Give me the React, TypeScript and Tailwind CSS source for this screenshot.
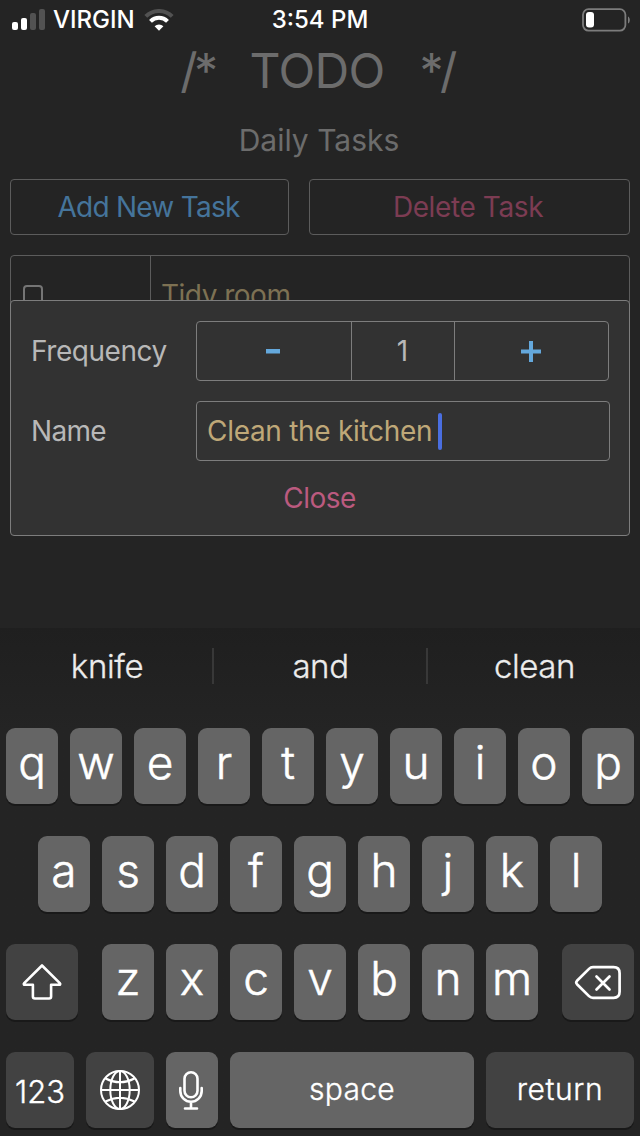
import type { ReactNode } from "react";

function StatusBar() {
  return (
    <header className="grid h-10 shrink-0 grid-cols-[1fr_auto_1fr] items-center pr-[10px] pl-3 text-[24px] leading-none font-medium text-white">
      <div className="flex items-center">
        <svg width="34" height="22" viewBox="0 0 34 22" aria-hidden="true">
          <rect x="0" y="13" width="6" height="8" rx="2" fill="#fff" />
          <rect x="9" y="9" width="6" height="12" rx="2" fill="#fff" />
          <rect x="18" y="4" width="6" height="17" rx="2" fill="#525252" />
          <rect x="27" y="0" width="6" height="21" rx="2" fill="#525252" />
        </svg>
        <span className="ml-[7px] w-[81px]">VIRGIN</span>
        <svg className="ml-[10px]" width="30" height="22" viewBox="0 0 30 22" aria-hidden="true">
          <path d="M1.8 7.4a18.8 18.8 0 0 1 26.4 0" fill="none" stroke="#525252" strokeWidth="4" />
          <path d="M6.5 12.4a12 12 0 0 1 17 0" fill="none" stroke="#fff" strokeWidth="4" />
          <path d="M15 21.8l-4.4-4.5a6.2 6.2 0 0 1 8.8 0z" fill="#fff" />
        </svg>
      </div>
      <span className="pr-[2px]">3:54 PM</span>
      <svg className="justify-self-end" width="48" height="24" viewBox="0 0 48 24" aria-hidden="true">
        <rect x="1" y="1.2" width="42.4" height="21.4" rx="5.5" fill="none" stroke="#7c7c7c" strokeWidth="1.8" />
        <rect x="4" y="4" width="8" height="15.6" rx="3" fill="#fff" />
        <path d="M46 8.5c2.4 1 2.4 6 0 7z" fill="#7c7c7c" />
      </svg>
    </header>
  );
}

function TaskForm() {
  return (
    <section className="absolute top-[45px] left-0 h-[236px] w-full rounded-[4px] border border-[#7d7d7d] bg-[#323232] px-5 pt-5 text-[#b8b8b8]">
      <div className="flex items-center">
        <span className="w-[165px] tracking-[-0.45px]">Frequency</span>
        <div className="grid h-[60px] w-[413px] grid-cols-[154px_104px_1fr] rounded-[4px] border border-[#7d7d7d]">
          <button className="flex items-center justify-center pr-[2px]">
            <svg width="14" height="5" aria-hidden="true">
              <rect width="14" height="4.5" fill="#64a8dc" />
            </svg>
          </button>
          <span className="flex items-center justify-center border-x border-[#7d7d7d] pr-px">1</span>
          <button className="flex items-center justify-center pr-[2px]">
            <svg width="20" height="21" viewBox="0 0 20 21" aria-hidden="true">
              <path d="M0 10.5h20M10 0v21" stroke="#64a8dc" strokeWidth="4" />
            </svg>
          </button>
        </div>
      </div>
      <div className="mt-5 flex items-center">
        <span className="w-[165px] shrink-0 tracking-[-0.7px]">Name</span>
        <div className="flex h-[60px] w-[414px] shrink-0 items-center rounded-[4px] border border-[#7d7d7d] pl-[10px] text-[#bfa878]">
          <span className="w-[225px] tracking-[-0.3px] whitespace-nowrap">Clean the kitchen</span>
          <span className="ml-[6px] h-[37px] w-1 rounded-full bg-[#4a6ee0]" />
        </div>
      </div>
      <button className="mx-auto mt-5 block pr-px tracking-[-0.5px] text-[#bb5a7f]">Close</button>
    </section>
  );
}

function Key({ children, className = "" }: { children: ReactNode; className?: string }) {
  return (
    <div className={`flex h-[76px] items-center justify-center rounded-[9px] text-white shadow-[0_2px_0_#191919] ${className}`}>
      {children}
    </div>
  );
}

function Letters({ row }: { row: string }) {
  return (
    <>
      {row.split("").map((letter) => (
        <Key key={letter} className="w-[52px] bg-[#656565] pb-2 text-[46px] leading-none font-light [-webkit-text-stroke:0.5px_#fff]">
          {letter}
        </Key>
      ))}
    </>
  );
}

function Keyboard() {
  return (
    <footer className="flex h-[508px] shrink-0 flex-col bg-linear-to-b from-[#1f1f1f] from-0% to-[#242424] to-20%">
      <div className="grid h-[76px] grid-cols-[212px_216px_212px] items-center text-[33px] leading-none font-light tracking-[-0.4px] text-[#ececec] [-webkit-text-stroke:0.3px_#ececec]">
        <span className="pl-[2px] text-center">knife</span>
        <span className="flex h-9 items-center justify-center border-x-2 border-[#383838] pl-px">and</span>
        <span className="pl-px text-center">clean</span>
      </div>
      <div className="mt-6 flex flex-col gap-8">
        <div className="flex justify-center gap-3">
          <Letters row="qwertyuiop" />
        </div>
        <div className="flex justify-center gap-3">
          <Letters row="asdfghjkl" />
        </div>
        <div className="flex justify-between px-[6px]">
          <Key className="w-[72px] bg-[#424242]">
            <svg width="40" height="38" viewBox="0 0 40 38" fill="none" stroke="#fff" strokeWidth="2.6" strokeLinejoin="round" aria-hidden="true">
              <path d="M20 2.5 2.2 20.2c-.8.9-.4 1.6.7 1.6h8v11.7q0 2 2 2h14.2q2 0 2-2V21.8h8c1.1 0 1.5-.7.7-1.6z" />
            </svg>
          </Key>
          <div className="flex gap-3">
            <Letters row="zxcvbnm" />
          </div>
          <Key className="w-[72px] bg-[#424242]">
            <svg width="48" height="36" viewBox="0 0 48 36" fill="none" stroke="#fff" strokeWidth="2.7" strokeLinejoin="round" strokeLinecap="round" aria-hidden="true">
              <path d="M19 3.2H39.6q6 0 6 6v18.600q0 6-6 6H19q-2.300 0-4-1.700L3 20.200q-1.500-1.700 0-3.400L15 4.900q1.700-1.700 4-1.700z" />
              <path d="m22.500 12.500 13 13M35.500 12.500l-13 13" />
            </svg>
          </Key>
        </div>
        <div className="flex gap-3 px-[6px] text-[30px] font-light [-webkit-text-stroke:0.35px_#fff]">
          <Key className="w-[68px] bg-[#424242] pt-[3px] text-[31px]">123</Key>
          <Key className="w-[68px] bg-[#424242]">
            <svg width="40" height="40" viewBox="0 0 40 40" fill="none" stroke="#fff" strokeWidth="2" aria-hidden="true">
              <circle cx="20" cy="20" r="19" />
              <ellipse cx="20" cy="20" rx="9.7" ry="19" />
              <path d="M20 1v38M1 20h38M5.500 8.500q14.500 7.500 29 0M5.500 31.500q14.500-7.500 29 0" />
            </svg>
          </Key>
          <Key className="w-[52px] bg-[#656565] pr-[2px]">
            <svg width="24" height="40" viewBox="0 0 24 40" fill="none" stroke="#fff" strokeWidth="2.6" strokeLinecap="round" aria-hidden="true">
              <rect x="5.5" y="2.3" width="13" height="25" rx="6.5" />
              <path d="M1.3 18v3a10.700 10.700 0 0 0 21.400 0v-3M12 32v6M6 38.500h12" />
            </svg>
          </Key>
          <Key className="w-[244px] bg-[#656565] pb-[2px] tracking-[0.3px]">space</Key>
          <Key className="w-[148px] bg-[#424242] pb-[2px] tracking-[0.6px]">return</Key>
        </div>
      </div>
    </footer>
  );
}

export default function App() {
  return (
    <div className="flex h-[1136px] w-[640px] flex-col overflow-hidden bg-[#242424] font-['Inter','Liberation_Sans',sans-serif] text-[28px] leading-[34px]">
      <StatusBar />
      <main className="flex flex-1 flex-col px-[10px]">
        <h1 className="flex h-[61px] items-center justify-center gap-[35px] pr-[6px] text-[48px] font-normal tracking-[-0.7px] text-[#6c6c6c]">
          <span className="tracking-[-3.5px]">/*</span>
          <span>TODO</span>
          <span className="tracking-[-3.5px]">*/</span>
        </h1>
        <h2 className="mt-[22px] pr-[2px] text-center text-[30px] text-[#6c6c6c]">Daily Tasks</h2>
        <div className="mt-[22px] flex h-14 gap-5">
          <button className="w-[279px] rounded-[4px] border border-[#5c5c5c] pr-[2px] tracking-[-0.75px] text-[#45749b]">Add New Task</button>
          <button className="flex-1 rounded-[4px] border border-[#5c5c5c] pr-[3px] tracking-[-0.4px] text-[#7c3c53]">Delete Task</button>
        </div>
        <div className="relative mt-5">
          <div className="flex h-20 items-center rounded-[4px] border border-[#5c5c5c]">
            <div className="flex h-full w-[140px] items-center border-r border-[#5c5c5c] pl-3">
              <span className="size-5 rounded-[4px] border-2 border-[#757575]" />
            </div>
            <span className="ml-[10px] tracking-[-0.5px] text-[#7d7153]">Tidy room</span>
          </div>
          <TaskForm />
        </div>
      </main>
      <Keyboard />
    </div>
  );
}
